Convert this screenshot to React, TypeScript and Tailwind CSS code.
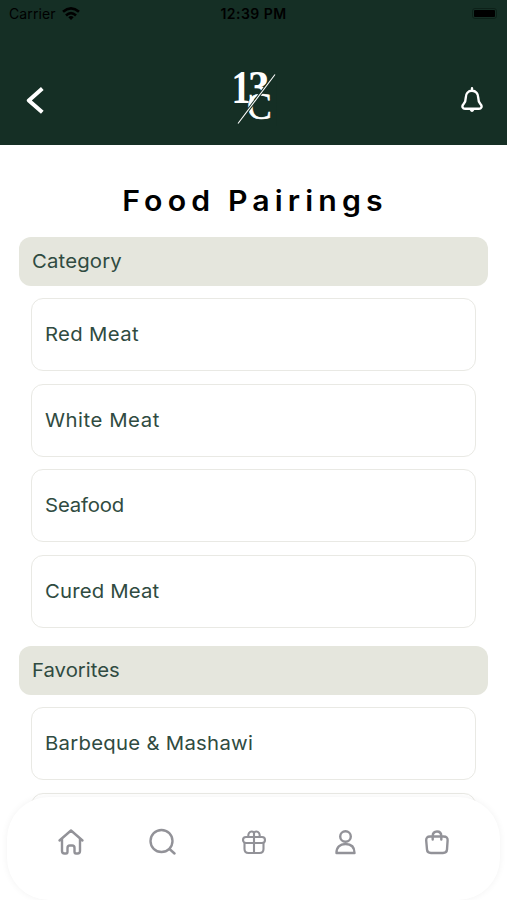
import React from "react";

type Item = { label: string; tracking: string };
type SectionProps = { title: string; items: Item[]; titleTracking: string };

function Section({ title, items, titleTracking }: SectionProps) {
  return (
    <section>
      <h2 className="mx-[19px] flex h-[49px] items-center rounded-xl bg-[#e5e6dd] pt-[1px] pl-[12.5px] text-[19px] font-normal text-[#304b41]">
        <span className={`origin-left scale-x-[1.07] ${titleTracking}`}>{title}</span>
      </h2>
      <ul className="mx-[31px] mt-[12px] flex flex-col gap-[12.5px]">
        {items.map((item) => (
          <li
            key={item.label}
            className="flex h-[73px] shrink-0 items-center rounded-xl border border-[#e9e9e4] bg-white pt-[2px] pl-[13px] text-[19px] font-normal text-[#304b41]"
          >
            <span className={`origin-left scale-x-[1.07] ${item.tracking}`}>{item.label}</span>
          </li>
        ))}
      </ul>
    </section>
  );
}

function Logo() {
  return (
    <svg width="44" height="60" viewBox="0 0 44 60" fill="white" aria-label="13C">
      <text transform="translate(-1.5 36) scale(0.82 1)" fontFamily="Liberation Serif, serif" fontWeight="700" fontSize="46">1</text>
      <text transform="translate(15 36) scale(0.92 1)" fontFamily="Liberation Serif, serif" fontWeight="700" fontSize="47">3</text>
      <path d="M43 5 4 57V60H44Z" fill="#152f25" />
      <text transform="translate(14 51.5) scale(0.98 1)" fontFamily="Liberation Serif, serif" fontSize="38" stroke="white" strokeWidth="0.5">C</text>
      <path d="M42 7.5 5 56.5" stroke="#152f25" strokeWidth="3" />
      <path d="M42 7.5 5 56.5" stroke="white" strokeWidth="1.1" />
    </svg>
  );
}

const stroke = {
  fill: "none",
  stroke: "currentColor",
  strokeWidth: 2.4,
  strokeLinecap: "round" as const,
  strokeLinejoin: "round" as const,
};

export default function App() {
  return (
    <div className="relative flex h-[900px] w-full flex-col overflow-hidden bg-white font-['Inter',sans-serif]">
      <header className="h-[145px] shrink-0 bg-[#152f25]">
        <div className="grid h-[27px] grid-cols-3 items-center px-[9px] text-[14px] text-black">
          <div className="flex items-center gap-[6px]">
            <span className="tracking-[0.1px]">Carrier</span>
            <svg width="18" height="14" viewBox="0 0 18 14" fill="none" stroke="black" strokeWidth="2.7">
              <path d="M1 4.8Q9-2 17 4.8" />
              <path d="M4 8.4Q9 4 14 8.4" />
              <path d="M9 13 6.3 10.2Q9 8 11.7 10.2Z" fill="black" stroke="none" />
            </svg>
          </div>
          <span className="text-center font-semibold tracking-[0.45px]">12:39 PM</span>
          <div className="mr-[1.5px] h-[11px] w-[25px] justify-self-end rounded-[3px] border border-[#0d2119] p-px">
            <div className="h-full w-full rounded-[1px] bg-black" />
          </div>
        </div>
        <div className="flex h-[116px] items-center justify-between pr-[24px] pl-[26px] text-white">
          <svg width="19" height="28" viewBox="0 0 19 28" className="mt-[29px]" fill="none" stroke="currentColor" strokeWidth="4">
            <path d="M16.3 2.4 2.8 14.4 16.3 26.3" strokeLinejoin="round" />
          </svg>
          <div className="mt-[23px] ml-[3px]">
            <Logo />
          </div>
          <svg width="22" height="28" viewBox="0 0 22 28" className="mt-[29px]" {...stroke}>
            <path d="M11 2.2V4M11 4.8C7.1 4.8 4.8 7.7 4.8 11.5 4.8 16 3.7 16.8 2 18.8.7 20.7 1.8 22.7 4 22.7H18C20.2 22.7 21.3 20.7 20 18.8 18.3 16.8 17.2 16 17.2 11.5 17.2 7.7 14.9 4.8 11 4.8Z" />
            <path d="M9.8 23.5Q11 26 12.2 23.5Z" fill="currentColor" />
          </svg>
        </div>
      </header>

      <main className="min-h-0 grow overflow-hidden">
        <h1 className="flex h-[92px] items-center justify-center pt-[19px] pl-[3px] text-[28px] font-semibold text-black">
          <span className="scale-x-[1.08] tracking-[4.75px]">Food Pairings</span>
        </h1>
        <div className="flex flex-col gap-[18.5px]">
          <Section
            title="Category"
            titleTracking="tracking-[0.15px]"
            items={[
              { label: "Red Meat", tracking: "tracking-[0.3px]" },
              { label: "White Meat", tracking: "tracking-[0.5px]" },
              { label: "Seafood", tracking: "tracking-[-0.15px]" },
              { label: "Cured Meat", tracking: "tracking-[0.15px]" },
            ]}
          />
          <Section
            title="Favorites"
            titleTracking="tracking-[0px]"
            items={[
              { label: "Barbeque & Mashawi", tracking: "tracking-[0.25px]" },
              { label: "", tracking: "tracking-normal" },
            ]}
          />
        </div>
      </main>

      <nav className="absolute inset-x-[7px] top-[797px] flex h-[103px] justify-between rounded-[42px] bg-white px-[50px] pt-[31px] text-[#929298] shadow-[0_0_7px_rgba(0,0,0,0.055)]">
        <svg width="28" height="28" viewBox="0 0 28 28" {...stroke}>
          <path d="M2.5 12.5 14 2.5 25.5 12.5M5 11V23Q5 25.5 7.5 25.5H9Q10.5 25.5 10.5 23.5V20Q10.5 17.5 12.8 17.5H15.2Q17.5 17.5 17.5 20V23.5Q17.5 25.5 19 25.5H20.5Q23 25.5 23 23V11" />
        </svg>
        <svg width="28" height="28" viewBox="0 0 28 28" {...stroke}>
          <circle cx="13.5" cy="13" r="11" />
          <path d="m21.5 21 5 4.5" />
        </svg>
        <svg width="28" height="28" viewBox="0 0 28 28" {...stroke} strokeWidth={2.1}>
          <rect x="3" y="9" width="22" height="6" rx="3" />
          <path d="M4.5 15V21Q4.5 25 8.5 25H19.5Q23.5 25 23.5 21V15M14 5V25M8.5 9C7.7 5.7 9.6 3.5 11.7 3.5 13.3 3.5 14 4.5 14 5.5 14 4.5 14.7 3.5 16.3 3.5 18.4 3.5 20.3 5.7 19.5 9" />
        </svg>
        <svg width="28" height="28" viewBox="0 0 28 28" {...stroke}>
          <circle cx="14.5" cy="8.5" r="5.3" />
          <path d="M5.5 25C5.5 19.2 8.8 16 14.5 16S23.5 19.2 23.5 25Z" />
        </svg>
        <svg width="28" height="28" viewBox="0 0 28 28" {...stroke}>
          <path d="M8 8.5H21.5Q26 8.5 25.6 12.5L25 21.5Q24.8 25 21 25H9Q5.2 25 5 21.5L4.2 12.5Q4 8.5 8 8.5ZM10.7 11.5V8.2Q10.7 3.5 15 3.5T19.3 8.2V11.5" />
        </svg>
      </nav>
    </div>
  );
}
